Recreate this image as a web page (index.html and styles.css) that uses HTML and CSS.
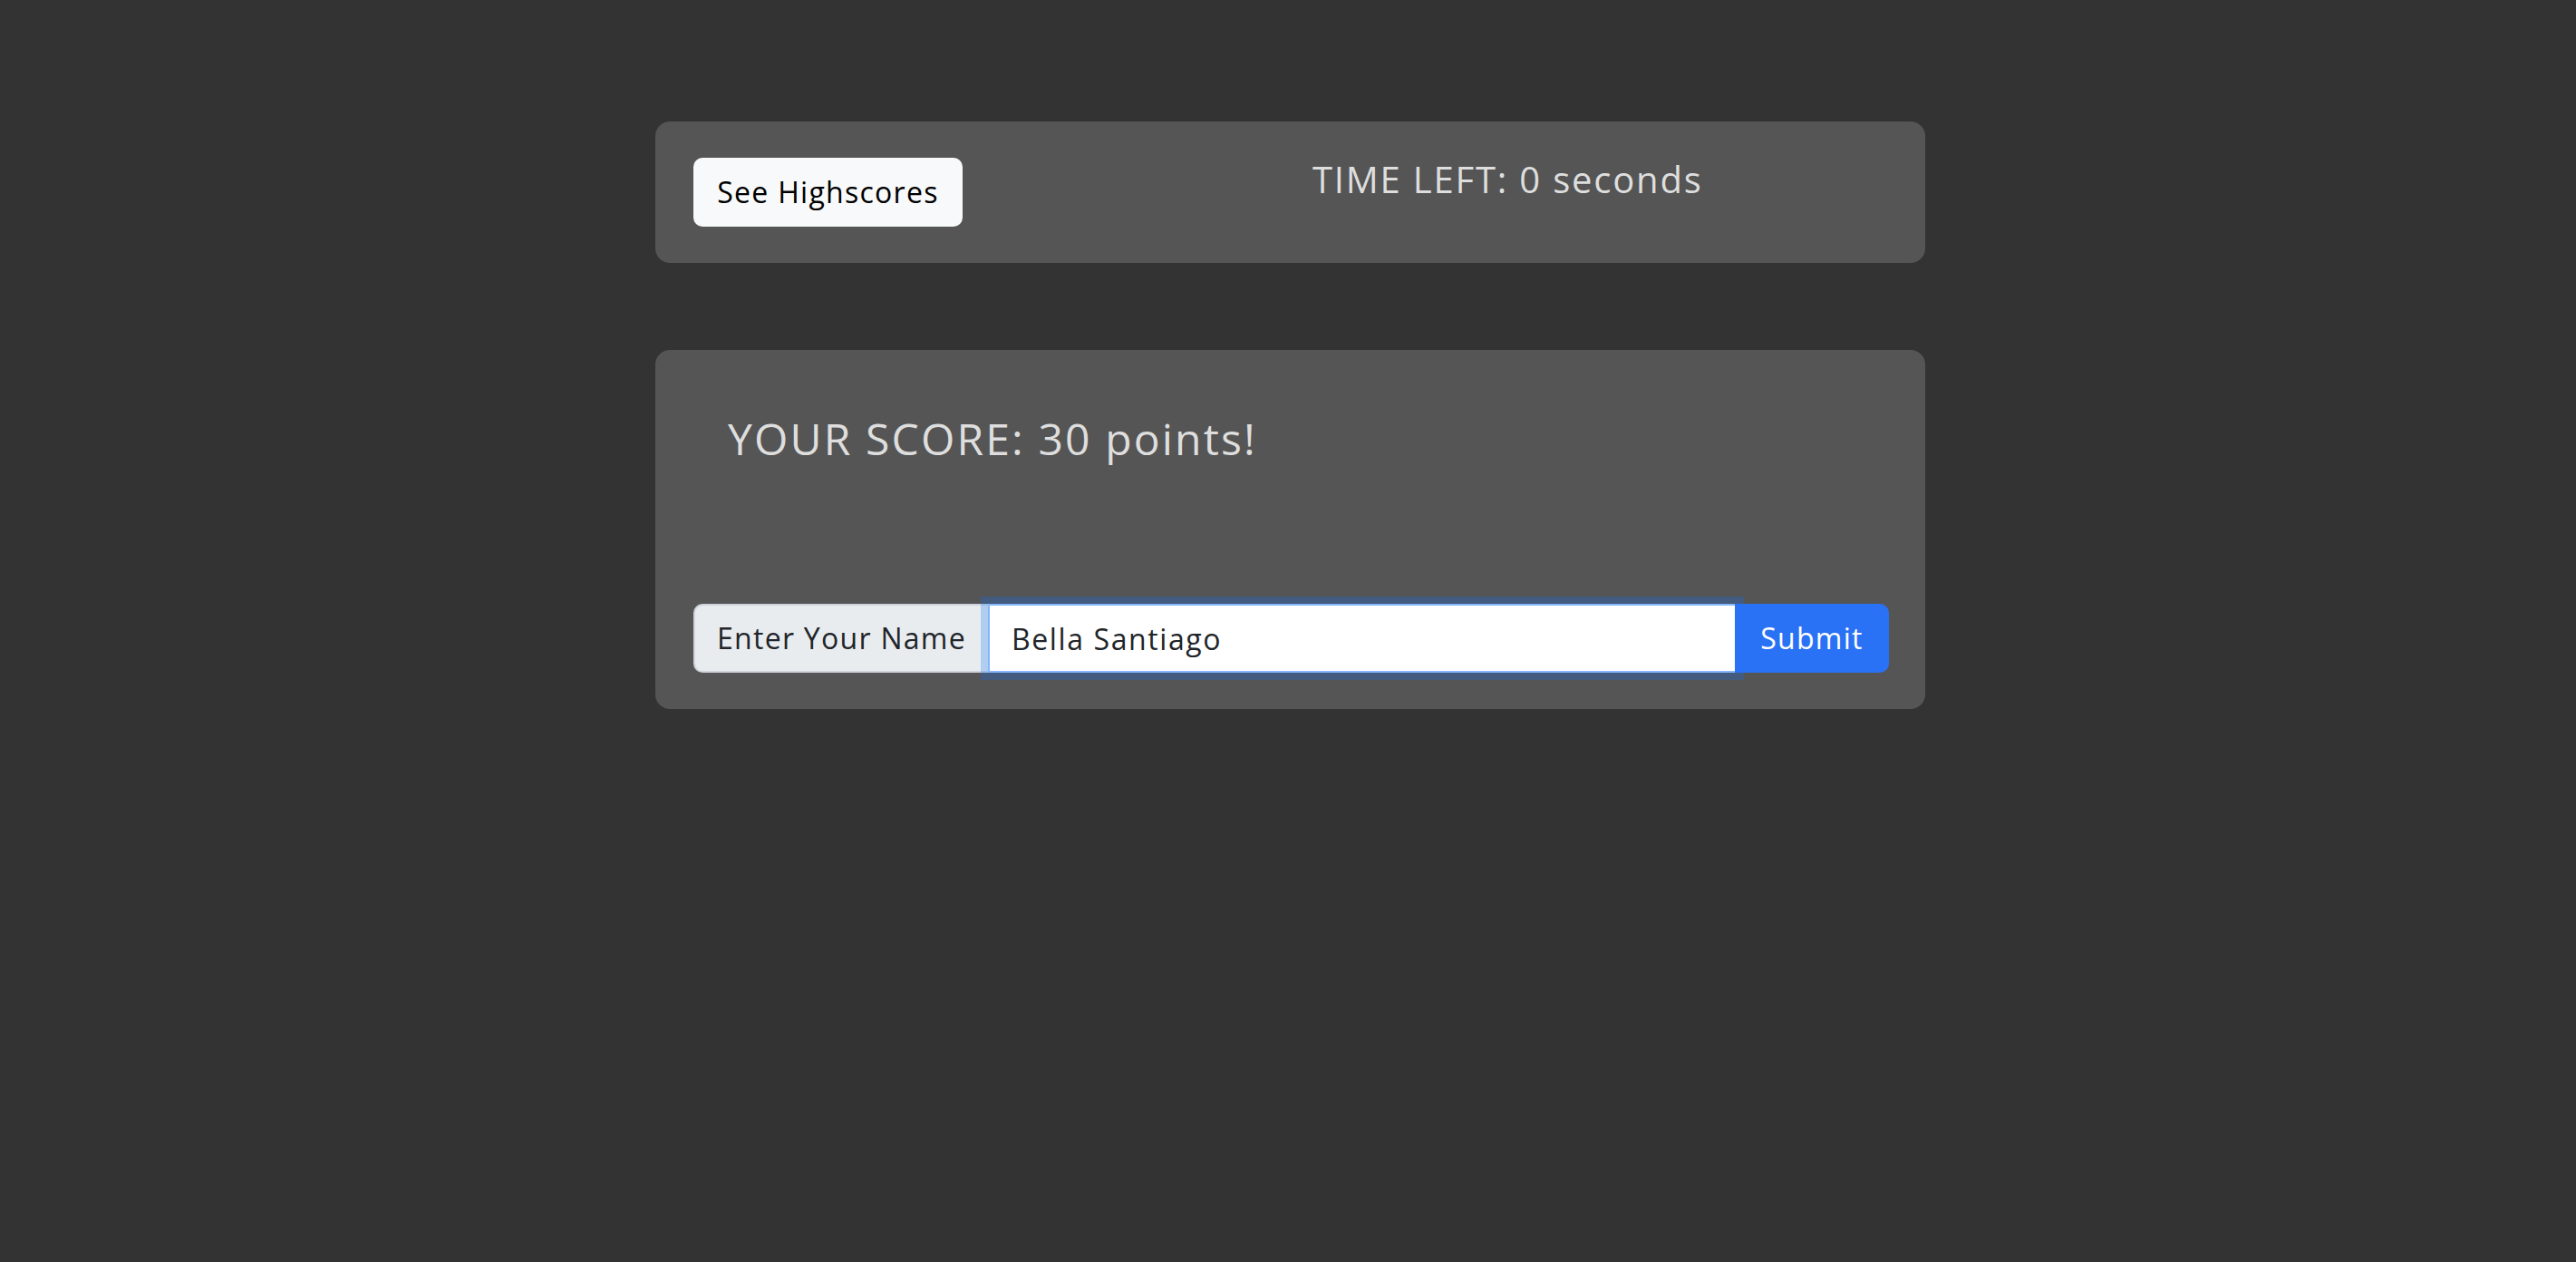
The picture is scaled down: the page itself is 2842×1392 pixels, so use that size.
FILE: index.html
```html
<!DOCTYPE html>
<html lang="en">
<head>
<meta charset="utf-8">
<title>Quiz</title>
<link rel="stylesheet" href="styles.css">
</head>
<body>
<main class="container">
  <header class="card card-top">
    <button class="btn btn-light" type="button">See Highscores</button>
    <h5 class="timer">TIME LEFT: 0 seconds</h5>
  </header>
  <section class="card card-score">
    <h4 class="score">YOUR SCORE: 30 points!</h4>
    <form class="input-group">
      <span class="input-group-text">Enter Your Name</span>
      <input class="form-control" type="text" value="Bella Santiago">
      <button class="btn btn-primary" type="button">Submit</button>
    </form>
  </section>
</main>
</body>
</html>
```

FILE: styles.css
```css
html, body {
  margin: 0;
  padding: 0;
}
body {
  background: #333333;
  font-family: "Open Sans", "Liberation Sans", sans-serif;
  color: #212529;
  height: 1392px;
  overflow: hidden;
}
.container {
  width: 1401px;
  margin: 134px 0 0 723px;
}
.card {
  background: #555555;
  border-radius: 16px;
  box-sizing: border-box;
}
.card-top {
  display: flex;
  align-items: flex-start;
  padding: 40px 40px 40px 42px;
}
.btn {
  font-family: inherit;
  font-size: 32px;
  line-height: 48px;
  padding: 12px 0;
  text-align: center;
  border: 2px solid transparent;
  border-radius: 10px;
  box-sizing: border-box;
  height: 76px;
  letter-spacing: 0.04em;
  white-space: nowrap;
}
.btn-light {
  background: #f8f9fa;
  border-color: #f8f9fa;
  color: #000;
  width: 297px;
}
.timer {
  margin: 0 0 0 386px;
  font-size: 40px;
  line-height: 48px;
  font-weight: 400;
  color: #dedede;
  letter-spacing: 0.045em;
}
.card-score {
  margin-top: 96px;
  padding: 40px 40px 40px 42px;
}
.score {
  margin: 29px 0 0 38px;
  font-size: 48px;
  line-height: 58px;
  font-weight: 400;
  color: #dedede;
  letter-spacing: 0.045em;
}
.input-group {
  display: flex;
  margin: 153px 0 0 0;
  height: 76px;
}
.input-group-text {
  box-sizing: border-box;
  width: 327px;
  height: 76px;
  padding: 12px 24px;
  font-size: 32px;
  line-height: 48px;
  background: #e9ecef;
  border: 2px solid #ced4da;
  border-radius: 10px 0 0 10px;
  color: #212529;
  letter-spacing: 0.04em;
  white-space: nowrap;
}
.form-control {
  flex: 1;
  min-width: 0;
  box-sizing: border-box;
  height: 76px;
  margin-left: -2px;
  padding: 12px 24px;
  font-family: inherit;
  font-size: 32px;
  line-height: 48px;
  color: #212529;
  background: #fff;
  border: 2px solid #86b7fe;
  border-radius: 0;
  outline: none;
  box-shadow: 0 0 0 8px rgba(13, 110, 253, 0.25);
  position: relative;
  z-index: 3;
  letter-spacing: 0.05em;
}
.btn-primary {
  width: 170px;
  margin-left: -2px;
  background: #2a72f5;
  border-color: #2a72f5;
  color: #fff;
  border-radius: 0 10px 10px 0;
  position: relative;
  z-index: 4;
}
```
